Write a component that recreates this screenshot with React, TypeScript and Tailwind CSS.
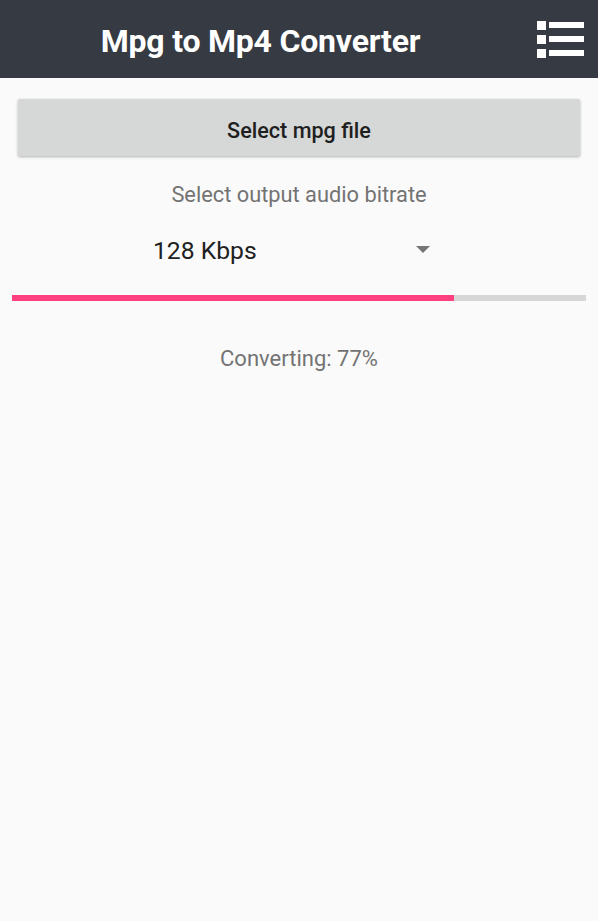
export default function App() {
  const progress = 77;
  return (
    <div
      className="flex min-h-[921px] w-full flex-col bg-[#fafafa]"
      style={{ fontFamily: 'Roboto, "Noto Sans", sans-serif' }}
    >
      <header className="flex h-[78px] items-center bg-[#363a42] pt-[3px]">
        <h1 className="flex-1 pr-[16px] text-center text-[32px] font-bold tracking-[-0.2px] text-white">
          Mpg to Mp4 Converter
        </h1>
        <button aria-label="Menu" className="mr-[14px] -mt-[3px] flex flex-col gap-[5px]">
          {[0, 1, 2].map((i) => (
            <span key={i} className="flex items-center gap-[3px]">
              <span className="h-[9px] w-[9px] bg-white" />
              <span className="h-[6px] w-[35px] bg-white" />
            </span>
          ))}
        </button>
      </header>

      <div className="mx-[18px] mt-[21px]">
        <button className="flex h-[57px] w-full items-center justify-center rounded-[2px] bg-[#d6d7d7] pt-[7px] text-[21.6px] font-medium text-[#1f1f1f] shadow-[0_1px_3px_rgba(0,0,0,0.3)]">
          Select mpg file
        </button>
      </div>

      <p className="mt-[25px] text-center text-[21.8px] leading-[28px] text-[#737373]">
        Select output audio bitrate
      </p>

      <div className="mx-auto mt-[20px] flex h-[40px] w-[300px] items-center justify-between pl-[4px] pr-[19px]">
        <span className="pt-[3px] text-[24.7px] text-[#212121]">128 Kbps</span>
        <span className="h-0 w-0 border-x-[7px] border-t-[7px] border-x-transparent border-t-[#757575]" />
      </div>

      <div className="mx-[12px] mt-[26px] h-[6px] bg-[#d7d7d7]">
        <div className="h-full bg-[#fe4081]" style={{ width: `${progress}%` }} />
      </div>

      <p className="mt-[44px] text-center text-[22px] leading-[28px] text-[#737373]">
        Converting: {progress}%
      </p>
    </div>
  );
}
